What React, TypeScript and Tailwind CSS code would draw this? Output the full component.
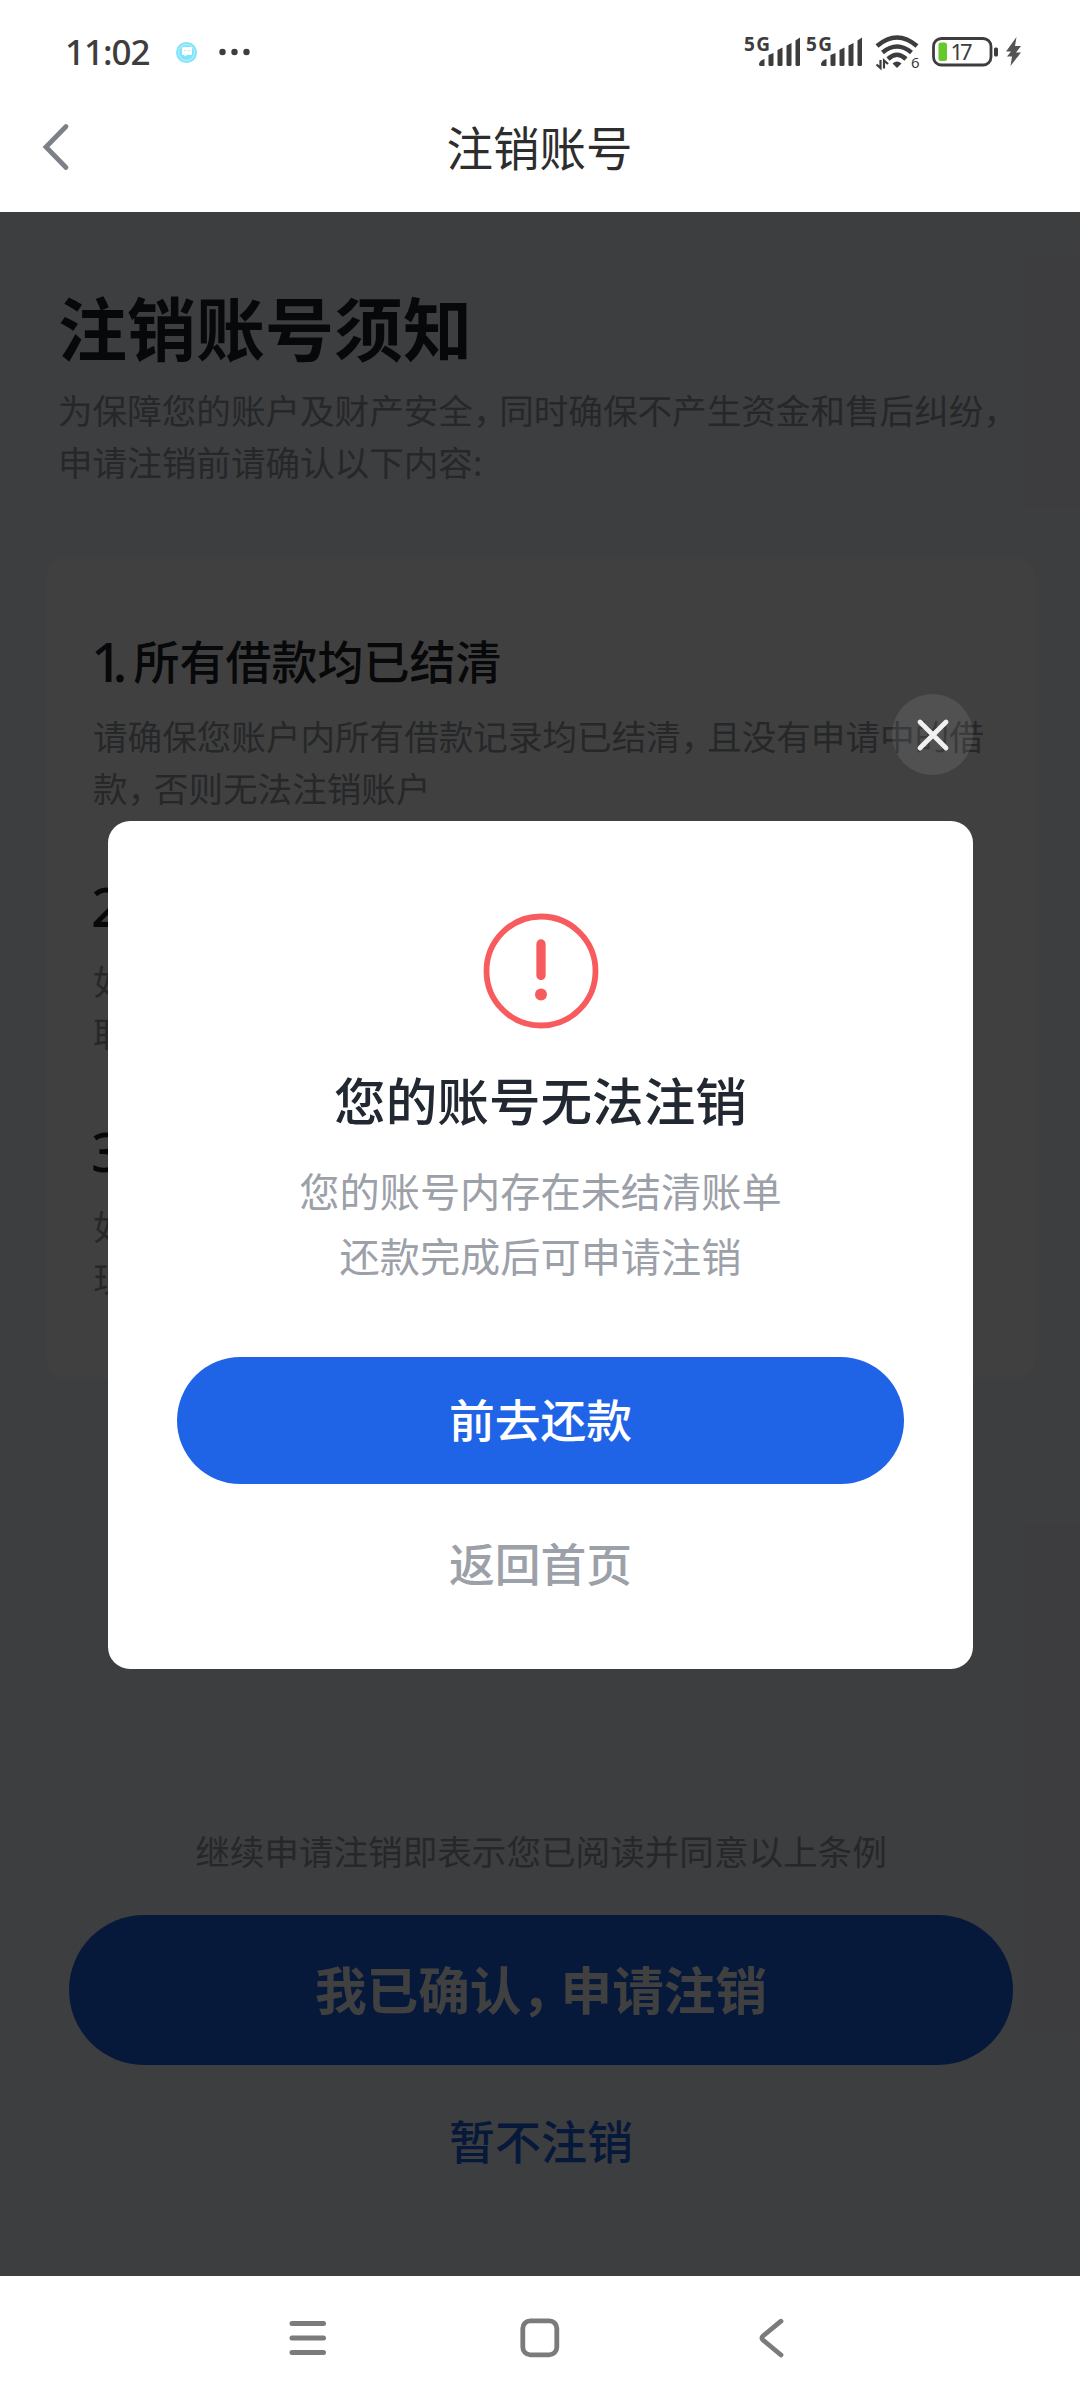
import { ReactNode } from 'react';

const NOTICE_ITEMS = [
  {
    title: '所有借款均已结清',
    lines: ['请确保您账户内所有借款记录均已结清，且没有申请中的借', '款，否则无法注销账户']
  },
  { title: '', lines: ['如', '取'] },
  { title: '', lines: ['如', '现'] }
];

const App = () => {
  return (
    <div className="flex h-[2400px] w-[1080px] flex-col overflow-hidden bg-white font-['Noto_Sans','Noto_Sans_CJK_SC',sans-serif]">
      <StatusBar />
      <Header />
      <main className="relative h-[2064px] bg-[#f2f5fa]">
        <NoticePage />
        <BlockedDialog />
      </main>
      <NavigationBar />
    </div>
  );
};

const StatusBar = () => {
  return (
    <div className="flex h-[104px] items-center justify-between pr-[58px] pl-[65px] text-[#3d3d3d]">
      <div className="flex items-center">
        <span className="w-[88px] text-[35px] leading-[40px] font-medium tracking-[-1px]">11:02</span>
        <svg className="ml-[22px]" width="23" height="23" viewBox="0 0 23 23">
          <circle cx="11.5" cy="11.5" r="10.5" fill="#7fe3fb" />
          <circle cx="11.5" cy="11.5" r="8" fill="none" stroke="#a9eefc" strokeWidth="1.5" />
          <path d="M8 6h8a1 1 0 0 1 1 1v6a1 1 0 0 1-1 1h-4l-2.500 1.500v-1.500H8a1 1 0 0 1-1-1V7a1 1 0 0 1 1-1z" fill="#fff" />
          <path d="M9.500 9.500h1M13.500 9.500h1" stroke="#7fd5ea" strokeWidth="1.200" />
        </svg>
        <svg className="ml-[21px]" width="31" height="8" viewBox="0 0 31 8" fill="currentColor">
          <circle cx="3.500" cy="4" r="3.200" />
          <circle cx="15.500" cy="4" r="3.200" />
          <circle cx="27.500" cy="4" r="3.200" />
        </svg>
      </div>
      <div className="flex items-center">
        <SignalIcon />
        <SignalIcon />
        <WifiIcon />
        <BatteryIcon />
        <svg className="ml-[7px]" width="17" height="32" viewBox="0 0 17 32">
          <path d="M11.500 1 1 15.500h5L2 20.500h5L5.500 30 16 16.500h-5l5-6.500h-6z" fill="#555" />
        </svg>
      </div>
    </div>
  );
};

const SignalIcon = () => {
  return (
    <svg className="mr-[4.700px] overflow-visible" width="58" height="34" viewBox="0 0 58 34" fill="currentColor">
      <text x="0" y="15.500" fontSize="19" fontWeight="700" textLength="26">
        5G
      </text>
      <path d="M15 29.500q0-3 4-5l1.500-.5v7H17q-2 0-2-1.500z" />
      <path d="M24.500 20l5-2v11.500q0 1.500-1.500 1.500h-2q-1.500 0-1.500-1.500z" />
      <path d="M33.500 15l5-2.500v17q0 1.500-1.500 1.500h-2q-1.500 0-1.500-1.500z" />
      <path d="M42.500 10.500l5-2.500v21.500q0 1.500-1.500 1.500h-2q-1.500 0-1.500-1.500z" />
      <path d="M51.500 5.500l4.500-3v27q0 1.500-1.500 1.500H53q-1.500 0-1.500-1.500z" />
    </svg>
  );
};

const WifiIcon = () => {
  return (
    <svg className="ml-[6px] overflow-visible" width="45" height="36" viewBox="0 0 45 36" fill="none" stroke="currentColor">
      <path d="M2 12Q22 -5 42 12" strokeWidth="4.500" />
      <path d="M7.500 18.500Q22 6.500 36.500 18.500" strokeWidth="4.500" />
      <path d="M13 25Q22 16.500 31 25" strokeWidth="4.500" />
      <path d="M22 34l-4.500-4.500q4.500-4 9 0z" fill="currentColor" stroke="none" />
      <path d="M5.500 26v8L1.500 30.500M9 34.500v-8l4 3.500" strokeWidth="2.200" />
      <text x="36" y="33.500" fontSize="15" fill="currentColor" stroke="none">
        6
      </text>
    </svg>
  );
};

const BatteryIcon = () => {
  return (
    <svg className="ml-[12px] overflow-visible" width="66" height="32" viewBox="0 0 66 32">
      <rect x="1.500" y="2.500" width="57.500" height="26.500" rx="8" fill="none" stroke="currentColor" strokeWidth="2.800" />
      <rect x="6.500" y="6.500" width="8.500" height="18.500" rx="2.500" fill="#65c82b" />
      <text x="18.500" y="23.500" fontSize="22" textLength="22" fill="currentColor">
        17
      </text>
      <rect x="62" y="11.500" width="4" height="9" rx="1.500" fill="currentColor" />
    </svg>
  );
};

const Header = () => {
  return (
    <header className="flex h-[108px] items-center px-10">
      <svg width="32" height="50" viewBox="0 0 32 50" className="-mt-[22px] shrink-0">
        <path d="M26 4.500 6 25l20 20.500" fill="none" stroke="#7c8188" strokeWidth="4.800" strokeLinecap="round" />
      </svg>
      <h1 className="-mt-[20px] flex-1 pr-[33px] text-center text-[46.500px] leading-[60px] text-[#2d2d2d]">注销账号</h1>
    </header>
  );
};

const Tight = ({ text }: { text: string }) => {
  const parts = text.split('，');
  return (
    <>
      {parts.map((part, index) => (
        <span key={index}>
          {index > 0 && <span className="tracking-[-0.24em]">，</span>}
          {part}
        </span>
      ))}
    </>
  );
};

const Line = ({ children }: { children: ReactNode }) => {
  return <div className="h-[52px] text-[34.600px] leading-[52px] whitespace-nowrap text-[#979ca4]">{children}</div>;
};

const NoticePage = () => {
  return (
    <div className="flex flex-col">
      <section className="px-[58px] pt-[72px]">
        <h2 className="text-[69px] leading-[90px] font-bold text-[#1f2329]">注销账号须知</h2>
        <div className="mt-[11px]">
          <Line>
            <Tight text="为保障您的账户及财产安全，同时确保不产生资金和售后纠纷，" />
          </Line>
          <Line>申请注销前请确认以下内容:</Line>
        </div>
      </section>

      <section className="mr-[44px] ml-[46px] mt-[68px] flex h-[822px] flex-col rounded-[22px] bg-white px-[47px] pt-[74px]">
        {NOTICE_ITEMS.map((item, index) => (
          <div key={index} className="h-[245px]">
            <h3 className="flex h-[60px] text-[46px] leading-[60px] font-medium whitespace-nowrap text-[#1f2329]">
              <span className="mr-[16px] -ml-[2px] text-[55px] leading-[59px] tracking-[-10px]">{index + 1}.</span>
              <span>{item.title}</span>
            </h3>
            <div className="mt-[20px]">
              {item.lines.map((line) => (
                <Line key={line}>
                  <Tight text={line} />
                </Line>
              ))}
            </div>
          </div>
        ))}
      </section>

      <section className="mt-[447px] flex flex-col items-center pl-[2px]">
        <Line>继续申请注销即表示您已阅读并同意以上条例</Line>
        <button className="mt-[37px] h-[150px] w-[944px] rounded-full bg-[#1f63e7] pt-[2px] text-[51.600px] font-bold text-white">
          <Tight text="我已确认，申请注销" />
        </button>
        <button className="mt-[46px] text-[46px] leading-[60px] font-medium text-[#1f63e7]">暂不注销</button>
      </section>
    </div>
  );
};

const BlockedDialog = () => {
  return (
    <div className="absolute inset-0 flex flex-col items-center bg-black/75 pt-[482px] pl-[1px]">
      <div className="flex w-[865px] justify-end">
        <button className="flex size-[81px] items-center justify-center rounded-full bg-white/9">
          <svg width="36" height="36" viewBox="0 0 36 36">
            <path d="M5 5l26 26M31 5 5 31" stroke="#f0f0f0" strokeWidth="4.800" strokeLinecap="round" />
          </svg>
        </button>
      </div>
      <div className="mt-[46px] flex h-[848px] w-[865px] flex-col items-center rounded-[22px] bg-white pt-[92px]">
        <svg width="116" height="116" viewBox="0 0 116 116">
          <circle cx="58" cy="58" r="54.500" fill="none" stroke="#f85b5e" strokeWidth="5.800" />
          <path d="M58 31v31.500" stroke="#f85b5e" strokeWidth="9.300" strokeLinecap="round" />
          <circle cx="58" cy="81.500" r="6" fill="#f85b5e" />
        </svg>
        <h2 className="mt-[37px] text-[51.600px] leading-[70px] font-medium text-[#222831]">您的账号无法注销</h2>
        <p className="mt-[24px] text-center text-[40.200px] leading-[64.500px] text-[#9ca0a8]">
          您的账号内存在未结清账单
          <br />
          还款完成后可申请注销
        </p>
        <button className="mt-[68px] h-[127px] w-[727px] rounded-full bg-[#1f63e7] text-[45.800px] font-medium text-white">
          前去还款
        </button>
        <button className="mt-[50px] text-[45.800px] leading-[60px] font-medium text-[#9ca0a8]">返回首页</button>
      </div>
    </div>
  );
};

const NavigationBar = () => {
  return (
    <nav className="flex h-[124px] items-center justify-center gap-[188px] text-[#7b7b7b]">
      <svg width="44" height="44" viewBox="0 0 44 44" fill="none" stroke="currentColor" strokeWidth="5" strokeLinecap="round">
        <path d="M6 7.500h31.500M6 22h31.500M6 36.500h31.500" />
      </svg>
      <svg width="44" height="44" viewBox="0 0 44 44" fill="none" stroke="currentColor" strokeWidth="4.800">
        <rect x="4.800" y="4.800" width="34" height="34" rx="7.500" />
      </svg>
      <svg width="44" height="44" viewBox="0 0 44 44" fill="none" stroke="currentColor" strokeWidth="4.800" strokeLinecap="round">
        <path d="M31 5.200 13 20q-2.200 2 0 4L31 39" />
      </svg>
    </nav>
  );
};

export default App;
